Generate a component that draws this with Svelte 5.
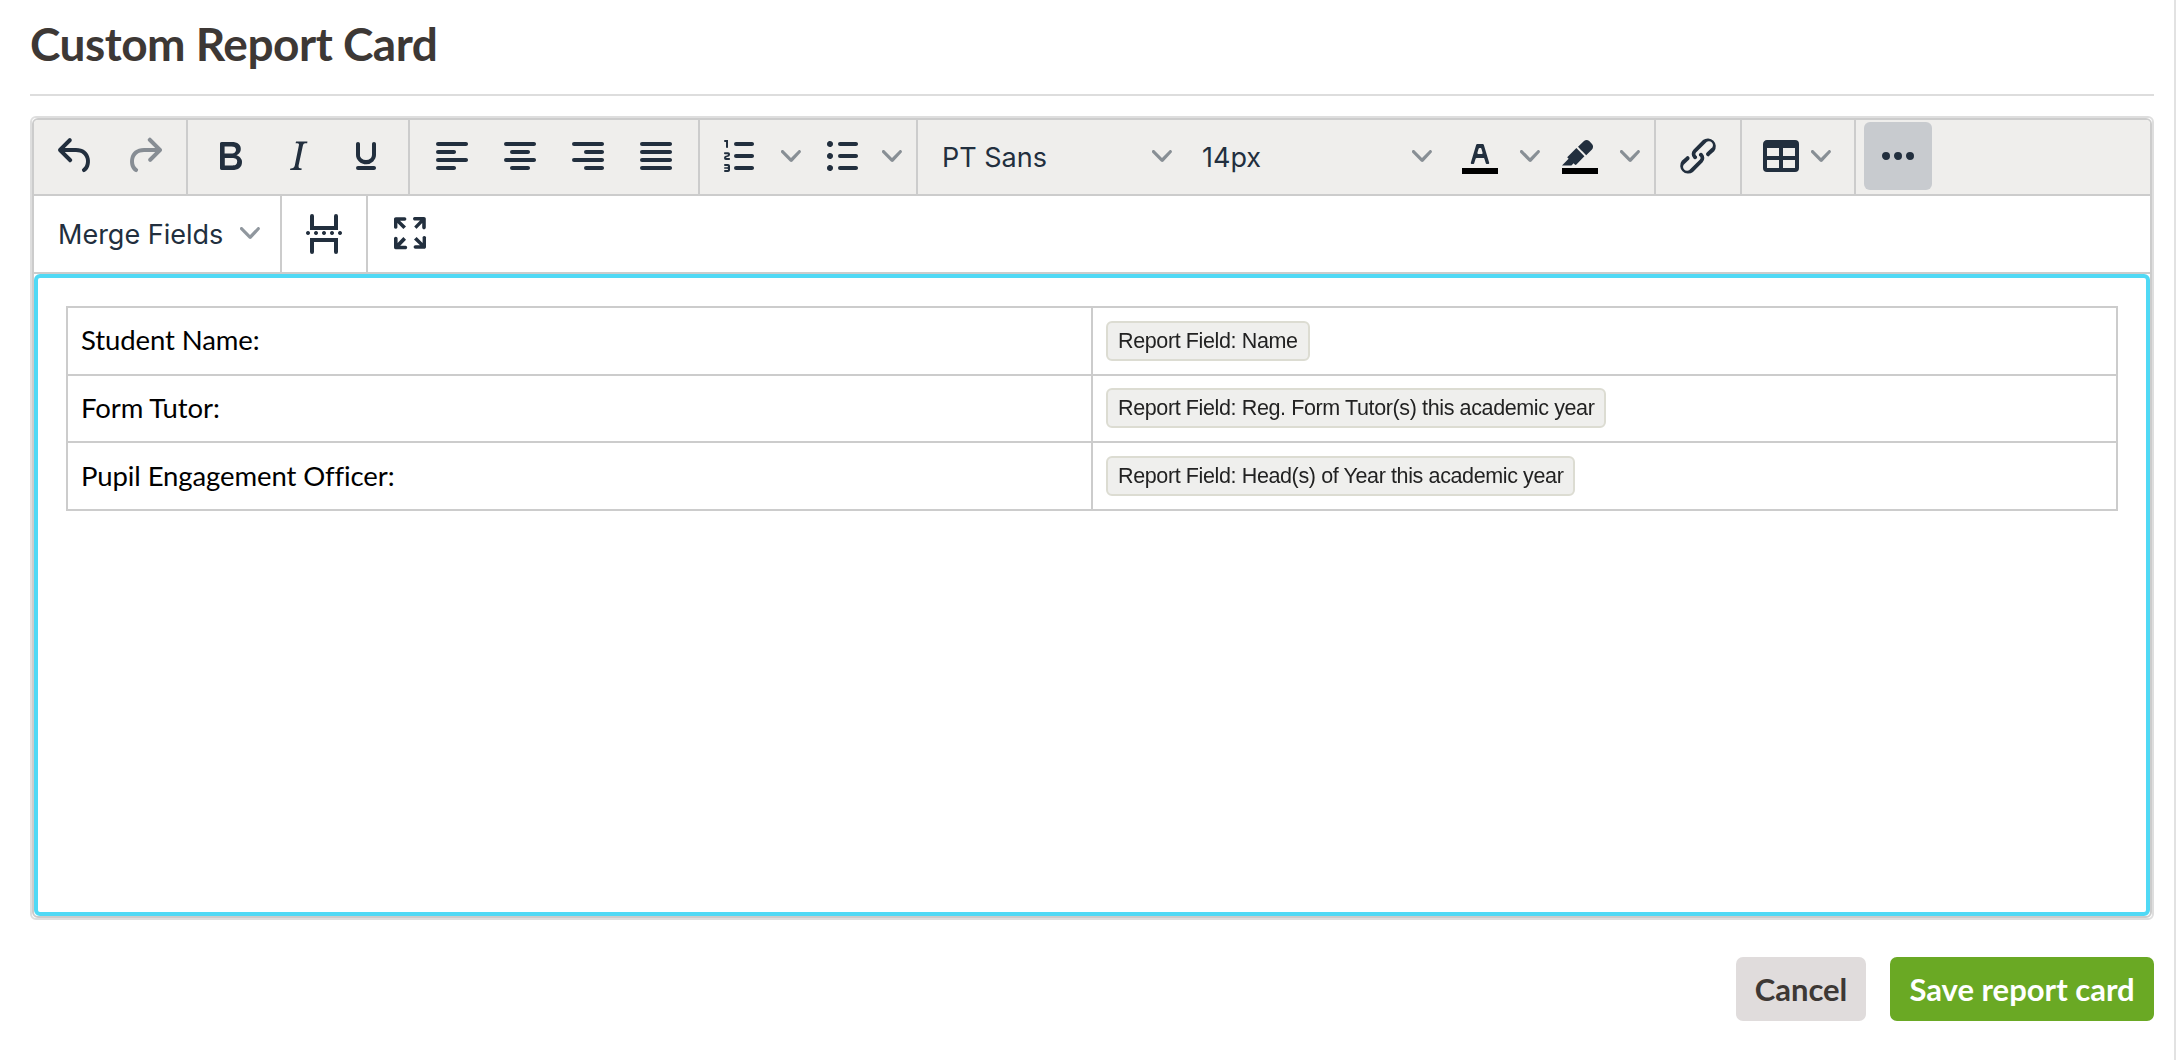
<script>
  const icons = {
    undo: 'M6.4 8H12c3.7 0 6.2 2 6.8 5.1.6 2.7-.4 5.6-2.3 6.8a1 1 0 0 1-1-1.8c1.1-.6 1.8-2.7 1.4-4.6-.5-2.1-2.1-3.5-4.9-3.5H6.4l3.3 3.3a1 1 0 1 1-1.4 1.4l-5-5a1 1 0 0 1 0-1.4l5-5a1 1 0 0 1 1.4 1.4L6.4 8z',
    redo: 'M17.6 10H12c-2.8 0-4.4 1.4-4.9 3.5-.4 2 .3 4 1.4 4.6a1 1 0 1 1-1 1.8c-2-1.2-2.9-4.1-2.3-6.8.6-3 3-5.1 6.8-5.1h5.6l-3.3-3.3a1 1 0 1 1 1.4-1.4l5 5a1 1 0 0 1 0 1.4l-5 5a1 1 0 0 1-1.4-1.4l3.3-3.3z',
    bold: 'M7.8 19c-.3 0-.5 0-.6-.2l-.2-.5V5.7c0-.2 0-.4.2-.5l.6-.2h5c1.5 0 2.7.3 3.5 1 .7.6 1.1 1.4 1.1 2.5a3 3 0 0 1-.6 1.9c-.4.6-1 1-1.6 1.2.4.1.9.3 1.3.6s.8.7 1 1.2c.4.4.5 1 .5 1.6 0 1.3-.4 2.3-1.3 3-.8.7-2.1 1-3.8 1H7.8zm5-8.3c.6 0 1.2-.1 1.6-.5.4-.3.6-.7.6-1.3 0-1.1-.8-1.7-2.3-1.7H9.3v3.5h3.4zm.5 6c.7 0 1.3-.1 1.7-.4.4-.4.6-.9.6-1.5s-.2-1-.7-1.4c-.4-.3-1-.4-2-.4H9.4v3.8h4z',
    italic: 'M16.7 4.7l-.1.9h-.3c-.6 0-1 0-1.4.3-.3.3-.4.6-.5 1.1l-2.1 9.8v.6c0 .5.4.8 1.4.8h.2l-.2.8H8l.2-.8h.2c1.1 0 1.8-.5 2-1.5l2-9.8.1-.5c0-.6-.4-.8-1.4-.8h-.3l.2-.9h5.8z',
    underline: 'M16 5c.6 0 1 .4 1 1v5.5a4 4 0 0 1-.4 1.8l-1 1.4a5.3 5.3 0 0 1-5.5 1 5 5 0 0 1-1.6-1c-.5-.4-.8-.9-1.1-1.4a4 4 0 0 1-.4-1.8V6c0-.6.4-1 1-1s1 .4 1 1v5.5c0 .3 0 .6.2 1l.6.7a3.3 3.3 0 0 0 2.2.8 3.4 3.4 0 0 0 2.2-.8c.3-.2.4-.5.6-.8l.2-.9V6c0-.6.4-1 1-1zM8 17h8c.6 0 1 .4 1 1s-.4 1-1 1H8a1 1 0 0 1 0-2z',
    left: 'M5 5h14c.6 0 1 .4 1 1s-.4 1-1 1H5a1 1 0 1 1 0-2zm0 4h8c.6 0 1 .4 1 1s-.4 1-1 1H5a1 1 0 1 1 0-2zm0 8h8c.6 0 1 .4 1 1s-.4 1-1 1H5a1 1 0 0 1 0-2zm0-4h14c.6 0 1 .4 1 1s-.4 1-1 1H5a1 1 0 0 1 0-2z',
    center: 'M5 5h14c.6 0 1 .4 1 1s-.4 1-1 1H5a1 1 0 1 1 0-2zm3 4h8c.6 0 1 .4 1 1s-.4 1-1 1H8a1 1 0 1 1 0-2zm0 8h8c.6 0 1 .4 1 1s-.4 1-1 1H8a1 1 0 0 1 0-2zm-3-4h14c.6 0 1 .4 1 1s-.4 1-1 1H5a1 1 0 0 1 0-2z',
    right: 'M5 5h14c.6 0 1 .4 1 1s-.4 1-1 1H5a1 1 0 1 1 0-2zm6 4h8c.6 0 1 .4 1 1s-.4 1-1 1h-8a1 1 0 0 1 0-2zm0 8h8c.6 0 1 .4 1 1s-.4 1-1 1h-8a1 1 0 0 1 0-2zm-6-4h14c.6 0 1 .4 1 1s-.4 1-1 1H5a1 1 0 0 1 0-2z',
    justify: 'M5 5h14c.6 0 1 .4 1 1s-.4 1-1 1H5a1 1 0 1 1 0-2zm0 4h14c.6 0 1 .4 1 1s-.4 1-1 1H5a1 1 0 1 1 0-2zm0 4h14c.6 0 1 .4 1 1s-.4 1-1 1H5a1 1 0 0 1 0-2zm0 4h14c.6 0 1 .4 1 1s-.4 1-1 1H5a1 1 0 0 1 0-2z',
    ol: 'M10 17h8c.6 0 1 .4 1 1s-.4 1-1 1h-8a1 1 0 0 1 0-2zm0-6h8c.6 0 1 .4 1 1s-.4 1-1 1h-8a1 1 0 0 1 0-2zm0-6h8c.6 0 1 .4 1 1s-.4 1-1 1h-8a1 1 0 1 1 0-2zM6 4v3.5c0 .3-.2.5-.5.5a.5.5 0 0 1-.5-.5V5h-.5a.5.5 0 0 1 0-1H6zm-1 8.8l.2.2h1.3c.3 0 .5.2.5.5s-.2.5-.5.5H4.9a1 1 0 0 1-.9-1V13c0-.4.3-.8.6-1l1.2-.4.2-.3a.2.2 0 0 0-.2-.2H4.5a.5.5 0 0 1-.5-.5c0-.3.2-.5.5-.5h1.6c.5 0 .9.4.9 1v.1c0 .4-.3.8-.6 1l-1.2.4-.2.3zM7 17v2c0 .6-.4 1-1 1H4.5a.5.5 0 0 1 0-1h1.2c.2 0 .3-.1.3-.3 0-.2-.1-.3-.3-.3H4.4a.4.4 0 1 1 0-.8h1.3c.2 0 .3-.1.3-.3 0-.2-.1-.3-.3-.3H4.5a.5.5 0 1 1 0-1H6c.6 0 1 .4 1 1z',
    ul: 'M11 5h8c.6 0 1 .4 1 1s-.4 1-1 1h-8a1 1 0 0 1 0-2zm0 6h8c.6 0 1 .4 1 1s-.4 1-1 1h-8a1 1 0 0 1 0-2zm0 6h8c.6 0 1 .4 1 1s-.4 1-1 1h-8a1 1 0 0 1 0-2zM4.5 6c0-.4.1-.8.4-1 .3-.4.7-.5 1.1-.5s.8.1 1 .4c.4.3.5.7.5 1.1s-.1.8-.4 1c-.3.4-.7.5-1.1.5s-.8-.1-1-.4c-.4-.3-.5-.7-.5-1.1zm0 6c0-.4.1-.8.4-1 .3-.4.7-.5 1.1-.5s.8.1 1 .4c.4.3.5.7.5 1.1s-.1.8-.4 1c-.3.4-.7.5-1.1.5s-.8-.1-1-.4c-.4-.3-.5-.7-.5-1.1zm0 6c0-.4.1-.8.4-1 .3-.4.7-.5 1.1-.5s.8.1 1 .4c.4.3.5.7.5 1.1s-.1.8-.4 1c-.3.4-.7.5-1.1.5s-.8-.1-1-.4c-.4-.3-.5-.7-.5-1.1z',
    textColor: 'M8.7 16h-.8a.5.5 0 0 1-.5-.6l2.7-9c.1-.3.3-.4.5-.4h2.8c.2 0 .4.1.5.4l2.7 9a.5.5 0 0 1-.5.6h-.8a.5.5 0 0 1-.4-.4l-.7-2.2c0-.3-.3-.4-.5-.4h-3.4c-.2 0-.4.1-.5.4l-.7 2.2c0 .3-.2.4-.4.4zm2.6-7.6l-.6 2a.5.5 0 0 0 .5.6h1.6a.5.5 0 0 0 .5-.6l-.6-2c0-.3-.3-.4-.5-.4h-.4c-.2 0-.4.1-.5.4z',
    highlight: 'M7.7 16.7H3l3.3-3.3-.7-.8L10.2 8l4 4.1-4 4.2c-.2.2-.6.2-.8 0l-.6-.7-1.1 1.1zm5-7.5L11 7.4l3-2.9a2 2 0 0 1 2.6 0L18 6c.7.7.7 2 0 2.7l-2.9 2.9-1.8-1.8-.5-.6',
    link: 'M6.2 12.3a1 1 0 0 1 1.4 1.4l-2.1 2a2 2 0 1 0 2.7 2.8l4.8-4.8a1 1 0 0 0 0-1.4 1 1 0 1 1 1.3-1.4 3 3 0 0 1 0 4.2L9.5 20a4 4 0 0 1-5.6-5.6l2.3-2zM17.8 11.7a1 1 0 1 1-1.4-1.4l2.1-2a2 2 0 1 0-2.7-2.8l-4.8 4.8a1 1 0 0 0 0 1.4 1 1 0 1 1-1.3 1.4 3 3 0 0 1 0-4.2L14.5 4a4 4 0 0 1 5.6 5.6l-2.3 2z',
    table: 'M19 4a2 2 0 0 1 2 2v12a2 2 0 0 1-2 2H5a2 2 0 0 1-2-2V6c0-1.1.9-2 2-2h14zM5 14v4h6v-4H5zm14 0h-6v4h6v-4zm0-6h-6v4h6V8zM5 12h6V8H5v4z',
    more: 'M6 10a2 2 0 0 0-2 2c0 1.1.9 2 2 2a2 2 0 0 0 2-2 2 2 0 0 0-2-2zm12 0a2 2 0 0 0-2 2c0 1.1.9 2 2 2a2 2 0 0 0 2-2 2 2 0 0 0-2-2zm-6 0a2 2 0 0 0-2 2c0 1.1.9 2 2 2a2 2 0 0 0 2-2 2 2 0 0 0-2-2z',
    pagebreak: 'M6 2.500a1 1 0 0 1 1 1V8.500h10V3.500a1 1 0 0 1 2 0v7H5v-7a1 1 0 0 1 1-1zM5 14.500h14v7a1 1 0 0 1-2 0v-5H7v5a1 1 0 0 1-2 0zM4 11a1 1 0 1 0 .01 0zM8 11a1 1 0 1 0 .01 0zM12 11a1 1 0 1 0 .01 0zM16 11a1 1 0 1 0 .01 0zM20 11a1 1 0 1 0 .01 0z',
    fullscreen: 'M15.300 10l-1.200-1.300 2.900-3h-2.300a.9.9 0 1 1 0-1.700H19c.5 0 .9.4.9.9v4.400a.9.9 0 1 1-1.800 0V7l-2.900 3zm0 4l3 3v-2.300a.9.9 0 1 1 1.700 0V19c0 .5-.4.9-.9.9h-4.400a.9.9 0 1 1 0-1.800H17l-3-2.900 1.300-1.200zM10 15.400l-2.900 3h2.300a.9.9 0 1 1 0 1.700H5a.9.9 0 0 1-1-.9v-4.400a.9.9 0 1 1 1.800 0V17l2.900-3 1.200 1.300zM8.700 10L5.700 7v2.300a.9.9 0 0 1-1.700 0V5c0-.5.4-.9.9-.9h4.400a.9.9 0 0 1 0 1.800H7l3 2.900-1.300 1.200z',
    chevron: 'M8.700 2.200c.3-.3.8-.3 1 0 .4.4.4.9 0 1.200L5.700 7.800c-.3.3-.9.3-1.200 0L.2 3.400a.8.8 0 0 1 0-1.200c.3-.3.8-.3 1.100 0L5 6l3.700-3.800z'
  };
  const rows = [
    ['Student Name:', 'Report Field: Name'],
    ['Form Tutor:', 'Report Field: Reg. Form Tutor(s) this academic year'],
    ['Pupil Engagement Officer:', 'Report Field: Head(s) of Year this academic year']
  ];
</script>

{#snippet icon(name)}
  <svg class="icon" viewBox="0 0 24 24" aria-hidden="true"><path d={icons[name]} /></svg>
{/snippet}
{#snippet colorIcon(name)}
  <svg class="icon" viewBox="0 0 24 24" aria-hidden="true"><path class="swatch" d="M3 18h18v3H3z" /><path d={icons[name]} /></svg>
{/snippet}
{#snippet chev()}
  <svg class="chev" viewBox="0 0 10 10" aria-hidden="true"><path d={icons.chevron} /></svg>
{/snippet}

<div class="page">
  <h1>Custom Report Card</h1>
  <div class="frame">
    <div class="tox">
      <div class="row grey">
        <div class="group">
          <span class="btn">{@render icon('undo')}</span>
          <span class="btn off">{@render icon('redo')}</span>
        </div>
        <div class="group">
          <span class="btn">{@render icon('bold')}</span>
          <span class="btn">{@render icon('italic')}</span>
          <span class="btn">{@render icon('underline')}</span>
        </div>
        <div class="group">
          <span class="btn">{@render icon('left')}</span>
          <span class="btn">{@render icon('center')}</span>
          <span class="btn">{@render icon('right')}</span>
          <span class="btn">{@render icon('justify')}</span>
        </div>
        <div class="group lists">
          <span class="btn">{@render icon('ol')}</span><span class="drop wide">{@render chev()}</span>
          <span class="btn">{@render icon('ul')}</span><span class="drop">{@render chev()}</span>
        </div>
        <div class="group fonts">
          <span class="select family"><span>PT Sans</span>{@render chev()}</span>
          <span class="select size"><span>14px</span>{@render chev()}</span>
          <span class="btn">{@render colorIcon('textColor')}</span><span class="drop">{@render chev()}</span>
          <span class="btn">{@render colorIcon('highlight')}</span><span class="drop">{@render chev()}</span>
        </div>
        <div class="group"><span class="btn">{@render icon('link')}</span></div>
        <div class="group">
          <span class="tablebtn">{@render icon('table')}{@render chev()}</span>
        </div>
        <div class="group last"><span class="btn active">{@render icon('more')}</span></div>
      </div>
      <div class="row white">
        <div class="group">
          <span class="select merge"><span>Merge Fields</span>{@render chev()}</span>
        </div>
        <div class="group"><span class="btn">{@render icon('pagebreak')}</span></div>
        <div class="group last"><span class="btn">{@render icon('fullscreen')}</span></div>
      </div>
      <div class="edit">
        <table>
          <tbody>
            {#each rows as [label, field]}
              <tr>
                <td>{label}</td>
                <td><span class="chip">{field}</span></td>
              </tr>
            {/each}
          </tbody>
        </table>
      </div>
    </div>
  </div>
  <div class="actions">
    <button class="cancel">Cancel</button>
    <button class="save">Save report card</button>
  </div>
</div>

<style>
  :global(body) { margin: 0; background: #fff; }
  .page {
    box-sizing: border-box;
    width: 2176px;
    height: 1060px;
    padding: 0 20px 0 30px;
    border-right: 2px solid #e2e2e2;
    overflow: hidden;
    font-family: Lato, sans-serif;
  }
  h1 {
    box-sizing: border-box;
    height: 96px;
    margin: 0 0 20px;
    padding-top: 15px;
    border-bottom: 2px solid #ddd;
    font-size: 46px;
    line-height: 58px;
    font-weight: 700;
    letter-spacing: -0.5px;
    color: #3d3835;
  }
  .frame {
    box-sizing: border-box;
    height: 804px;
    border: 2px solid #dedede;
    border-radius: 6px;
  }
  .tox {
    box-sizing: border-box;
    height: 800px;
    border: 2px solid #ccc;
    border-radius: 6px;
    overflow: hidden;
    display: flex;
    flex-direction: column;
  }
  .row {
    display: flex;
    align-items: stretch;
    box-sizing: border-box;
    border-bottom: 2px solid #ccc;
    flex: none;
  }
  .grey { background: #efeeec; margin-top: -2px; padding-top: 2px; height: 78px; }
  .white { background: #fff; height: 78px; }
  .group {
    display: flex;
    align-items: flex-start;
    padding: 2px 8px 0;
    border-right: 2px solid #ccc;
    flex: none;
  }
  .white .group { padding-top: 3px; }
  .group.last { border-right: 0; }
  .lists { padding-left: 6px; }
  .btn {
    width: 68px;
    height: 68px;
    display: flex;
    align-items: center;
    justify-content: center;
    border-radius: 6px;
    flex: none;
  }
  .btn.off { opacity: 0.5; }
  .btn.active { background: #c8cbcf; }
  .icon { width: 48px; height: 48px; fill: #222f3e; display: block; }
  .swatch { fill: #000; }
  .drop {
    width: 32px;
    height: 68px;
    display: flex;
    align-items: center;
    justify-content: center;
    flex: none;
  }
  .drop.wide { width: 34px; }
  .chev { width: 20px; height: 20px; fill: rgba(34, 47, 62, 0.5); display: block; flex: none; }
  .select {
    height: 68px;
    display: flex;
    align-items: center;
    justify-content: space-between;
    padding: 0 12px 0 16px;
    box-sizing: border-box;
    font-family: Inter, sans-serif;
    font-size: 27px;
    color: #222f3e;
    flex: none;
  }
  .select span { position: relative; top: 1px; }
  .family { width: 258px; margin-right: 2px; }
  .size { width: 258px; margin-right: 2px; }
  .merge { width: 230px; }
  .tablebtn {
    width: 96px;
    height: 68px;
    display: flex;
    align-items: center;
    padding-left: 7px;
    box-sizing: border-box;
    gap: 2px;
    flex: none;
  }
  .tablebtn .chev { margin-left: 4px; }
  .edit {
    box-sizing: border-box;
    flex: 1;
    border: 4px solid #50d9f5;
    border-radius: 6px;
    padding: 28px;
    background: #fff;
  }
  table {
    width: 2052px;
    table-layout: fixed;
    border-collapse: collapse;
    font-family: Lato, sans-serif;
    font-size: 27.5px;
    letter-spacing: -0.1px;
    color: #000;
  }
  td {
    border: 2px solid #ccc;
    height: 67.67px;
    box-sizing: border-box;
    padding: 0 13px 2px;
  }
  .chip {
    display: inline-block;
    box-sizing: border-box;
    height: 40px;
    line-height: 36px;
    margin-top: 2px;
    padding: 0 10px;
    border: 2px solid #dcdcd2;
    border-radius: 6px;
    background: #efefed;
    font-family: "Liberation Sans", sans-serif;
    font-size: 21.5px;
    letter-spacing: -0.38px;
    color: #222;
    vertical-align: middle;
    filter: blur(0.4px);
  }
  .actions {
    display: flex;
    justify-content: flex-end;
    gap: 24px;
    margin-top: 37px;
  }
  button {
    height: 64px;
    border: 0;
    border-radius: 7px;
    font-family: Lato, sans-serif;
    font-size: 31px;
    font-weight: 700;
    padding: 0;
    cursor: pointer;
  }
  .cancel { width: 130px; background: #e0dcdc; color: #3d3835; }
  .save { width: 264px; background: #6aa924; color: #fff; }
</style>
